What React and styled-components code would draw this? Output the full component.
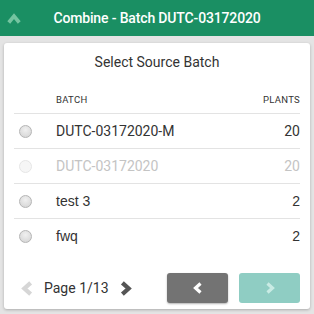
import styled, { createGlobalStyle } from "styled-components";

const Global = createGlobalStyle`
  html, body {
    margin: 0;
    padding: 0;
    background: #e4e4e4;
    font-family: Roboto, "Liberation Sans", sans-serif;
  }
`;

const Page = styled.div`
  width: 314px;
  height: 314px;
  overflow: hidden;
  background: #e4e4e4;
`;

const Header = styled.div`
  height: 36px;
  background: #1a8f63;
  display: flex;
  align-items: center;
  position: relative;
  color: #fff;
  font-size: 14px;
  font-weight: 500;
  letter-spacing: -0.15px;
  justify-content: center;
`;

const Collapse = styled.span`
  position: absolute;
  left: 7px;
  top: 12px;
  display: flex;
`;

const Card = styled.div`
  margin: 7px 4px 0;
  height: 266px;
  background: #fff;
  border-radius: 3px;
  box-shadow: 0 1px 3px rgba(0, 0, 0, 0.25);
  padding: 0 10px;
  display: flex;
  flex-direction: column;
`;

const Title = styled.div`
  text-align: center;
  font-size: 14px;
  color: #333;
  padding-top: 11px;
  height: 24px;
`;

const Table = styled.div`
  margin-top: 16px;
`;

const HeadRow = styled.div`
  display: grid;
  grid-template-columns: 42px 1fr auto;
  font-size: 9.5px;
  color: #333;
  letter-spacing: 0.3px;
  height: 19px;
  border-bottom: 1px solid #e3e3e3;
`;

const Row = styled.div`
  display: grid;
  grid-template-columns: 42px 1fr auto;
  align-items: center;
  height: 34px;
  border-bottom: ${(p) => (p.$last ? "none" : "1px solid #e3e3e3")};
  font-size: 14px;
  color: ${(p) => (p.$disabled ? "#c4c4c4" : "#333")};
  font-family: ${(p) =>
    p.$plain ? '"Liberation Sans", Arial, sans-serif' : "Roboto, sans-serif"};
`;

const Radio = styled.span`
  width: 11px;
  height: 11px;
  margin-left: 5px;
  border-radius: 50%;
  border: 1px solid ${(p) => (p.$disabled ? "#e6e6e6" : "#b5b5b5")};
  background: ${(p) =>
    p.$disabled
      ? "#f6f6f6"
      : "radial-gradient(circle at 50% 35%, #f0f0f0, #d2d2d2)"};
`;

const Num = styled.span`
  text-align: right;
`;

const Footer = styled.div`
  margin-top: auto;
  margin-bottom: 6px;
  display: flex;
  align-items: center;
  height: 30px;
`;

const Pager = styled.div`
  display: flex;
  align-items: center;
  gap: 9px;
  margin-left: 6px;
  font-size: 14px;
  color: #333;
  flex: 1;
`;

const Btn = styled.button`
  width: 61px;
  height: 30px;
  border: none;
  border-radius: 3px;
  background: ${(p) => (p.$disabled ? "#8fcdc3" : "#737373")};
  box-shadow: ${(p) => (p.$disabled ? "none" : "0 1px 2px rgba(0,0,0,0.3)")};
  display: flex;
  align-items: center;
  justify-content: center;
  margin-left: ${(p) => p.$gap || 0}px;
  padding: 0;
`;

const Chevron = ({ dir = "right", color, size = 12, weight = 3 }) => {
  const d =
    dir === "right"
      ? "M3.5 1.5 L8.5 6 L3.5 10.5"
      : dir === "left"
      ? "M8.5 1.5 L3.5 6 L8.5 10.5"
      : "M1.5 9 L6 3.5 L10.5 9";
  return (
    <svg width={size} height={size} viewBox="0 0 12 12">
      <path d={d} fill="none" stroke={color} strokeWidth={weight} strokeLinejoin="miter" />
    </svg>
  );
};

const rows = [
  { name: "DUTC-03172020-M", plants: 20 },
  { name: "DUTC-03172020", plants: 20, disabled: true },
  { name: "test 3", plants: 2, plain: true },
  { name: "fwq", plants: 2, plain: true },
];

export default function App() {
  return (
    <Page>
      <Global />
      <Header>
        <Collapse>
          <Chevron dir="up" color="#74c4a0" size={14} weight={3.2} />
        </Collapse>
        Combine - Batch DUTC-03172020
      </Header>
      <Card>
        <Title>Select Source Batch</Title>
        <Table>
          <HeadRow>
            <span />
            <span>BATCH</span>
            <Num>PLANTS</Num>
          </HeadRow>
          {rows.map((r, i) => (
            <Row
              key={r.name}
              $disabled={r.disabled}
              $plain={r.plain}
              $last={i === rows.length - 1}
            >
              <Radio $disabled={r.disabled} />
              <span>{r.name}</span>
              <Num>{r.plants}</Num>
            </Row>
          ))}
        </Table>
        <Footer>
          <Pager>
            <Chevron dir="left" color="#d6d6d6" size={15} weight={3.4} />
            <span>Page 1/13</span>
            <Chevron dir="right" color="#555" size={15} weight={3.4} />
          </Pager>
          <Btn>
            <Chevron dir="left" color="#fff" size={12} weight={3.2} />
          </Btn>
          <Btn $disabled $gap={11}>
            <Chevron dir="right" color="#c9ebe4" size={12} weight={3.2} />
          </Btn>
        </Footer>
      </Card>
    </Page>
  );
}
